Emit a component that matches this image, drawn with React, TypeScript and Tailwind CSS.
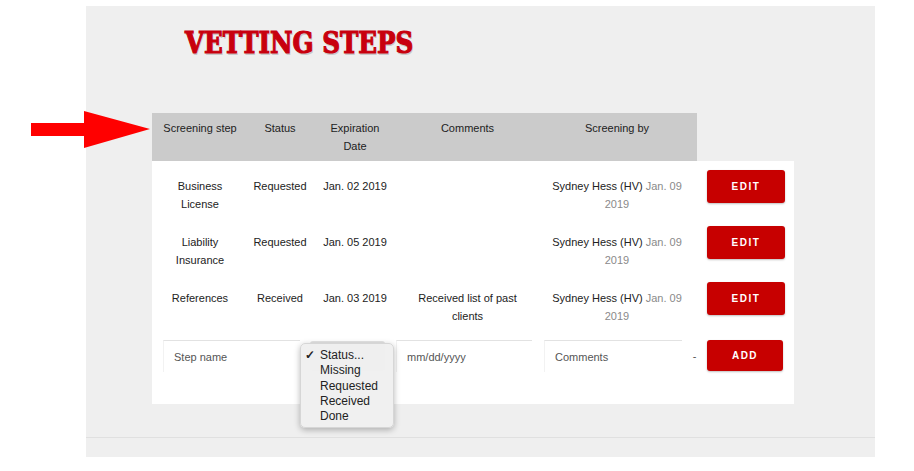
import React from "react";

const font = { fontFamily: '"Liberation Sans", Arial, sans-serif' };

function EditBtn({ label }: { label: string }) {
  return (
    <div className="w-[78px] h-[33px] rounded-[3px] bg-[#c70000] shadow-[0_1px_2px_rgba(0,0,0,0.25)] flex items-center justify-center text-white text-[10px] font-bold tracking-[0.15em]">
      {label}
    </div>
  );
}

const rows = [
  { step: ["Business", "License"], status: "Requested", date: "Jan. 02 2019", comments: [] as string[] },
  { step: ["Liability", "Insurance"], status: "Requested", date: "Jan. 05 2019", comments: [] as string[] },
  { step: ["References"], status: "Received", date: "Jan. 03 2019", comments: ["Received list of past", "clients"] },
];

export default function App() {
  return (
    <div className="relative w-[914px] h-[471px] bg-white text-[#222]" style={font}>
      {/* annotation arrow */}
      <svg className="absolute left-[31px] top-[111px]" width="120" height="38" viewBox="0 0 120 38">
        <polygon points="0,12 53,12 53,0 119,18 53,37 53,25 0,25" fill="#ff0000" />
      </svg>

      <div className="pt-[6px] pl-[86px]">
        <div className="w-[789px] h-[451px] bg-[#efefef] flex flex-col">
          <div className="pl-[99px] pt-[19px] h-[107px]">
            <h1
              className="inline-block origin-left scale-x-[0.82] text-[30px] leading-[36px] font-bold text-[#c8000e] whitespace-nowrap [-webkit-text-stroke:1.2px_#c8000e]"
              style={{ fontFamily: '"DejaVu Serif", serif', textShadow: "1px 2px 0 #c9c9c9" }}
            >
              VETTING STEPS
            </h1>
          </div>

          <div className="ml-[66px] w-[642px] text-[11px] leading-[18px]">
            {/* header */}
            <div className="flex w-[545px] h-[48px] bg-[#cbcbcb] pt-[6px] text-center">
              <div className="w-[96px]">Screening step</div>
              <div className="w-[64px]">Status</div>
              <div className="w-[86px]">Expiration<br />Date</div>
              <div className="w-[139px]">Comments</div>
              <div className="w-[160px]">Screening by</div>
            </div>

            {/* body */}
            <div className="bg-white h-[243px] flex flex-col">
              {rows.map((r, i) => (
                <div key={i} className="flex h-[56px] text-center">
                  <div className="w-[96px] pt-[16px]">
                    {r.step.map((s, j) => (
                      <div key={j}>{s}</div>
                    ))}
                  </div>
                  <div className="w-[64px] pt-[16px]">{r.status}</div>
                  <div className="w-[86px] pt-[16px]">{r.date}</div>
                  <div className="w-[139px] pt-[16px]">
                    {r.comments.map((s, j) => (
                      <div key={j}>{s}</div>
                    ))}
                  </div>
                  <div className="w-[160px] pt-[16px]">
                    <div>
                      Sydney Hess (HV) <span className="text-[#8a8a8a]">Jan. 09</span>
                    </div>
                    <div className="text-[#8a8a8a]">2019</div>
                  </div>
                  <div className="pl-[10px] pt-[9px]">
                    <EditBtn label="EDIT" />
                  </div>
                </div>
              ))}

              {/* add row */}
              <div className="relative flex items-start pt-[11px] pl-[11px] text-[11px]">
                <div className="w-[137px] h-[32px] border-t border-l border-[#e2e2e2] [border-left-color:#f2f2f2] flex items-center pl-[10px] text-[#555]">
                  Step name
                </div>
                <div className="ml-[10px] w-[75px] h-[30px] mt-[1px] rounded-[3px] bg-[#e4e4e4]" />
                <div className="ml-[11px] w-[136px] h-[32px] border-t border-l border-[#e2e2e2] [border-left-color:#f2f2f2] flex items-center pl-[10px] text-[#555]">
                  mm/dd/yyyy
                </div>
                <div className="ml-[12px] w-[138px] h-[32px] border-t border-l border-[#e2e2e2] [border-left-color:#f2f2f2] flex items-center pl-[10px] text-[#555]">
                  Comments
                </div>
                <div className="w-[25px] h-[32px] flex items-center justify-center text-[#555]">-</div>
                <div className="w-[76px] h-[31px] rounded-[3px] bg-[#c70000] shadow-[0_1px_2px_rgba(0,0,0,0.25)] flex items-center justify-center text-white text-[10px] font-bold tracking-[0.15em]">
                  ADD
                </div>

                {/* open select menu */}
                <div className="absolute left-[148px] top-[14px] w-[94px] h-[85px] rounded-[5px] bg-[#efefef]/95 shadow-[0_2px_6px_rgba(0,0,0,0.28)] border border-[#d6d6d6] pt-[4px] text-[12px] leading-[15.3px] text-[#222]">
                  <div className="flex">
                    <span className="w-[19px] pl-[4px] font-bold">✓</span>
                    <span>Status...</span>
                  </div>
                  <div className="pl-[19px]">Missing</div>
                  <div className="pl-[19px]">Requested</div>
                  <div className="pl-[19px]">Received</div>
                  <div className="pl-[19px]">Done</div>
                </div>
              </div>
            </div>
          </div>

          <div className="mt-auto h-[20px] border-t border-[#e0e0e0]" />
        </div>
      </div>
    </div>
  );
}
